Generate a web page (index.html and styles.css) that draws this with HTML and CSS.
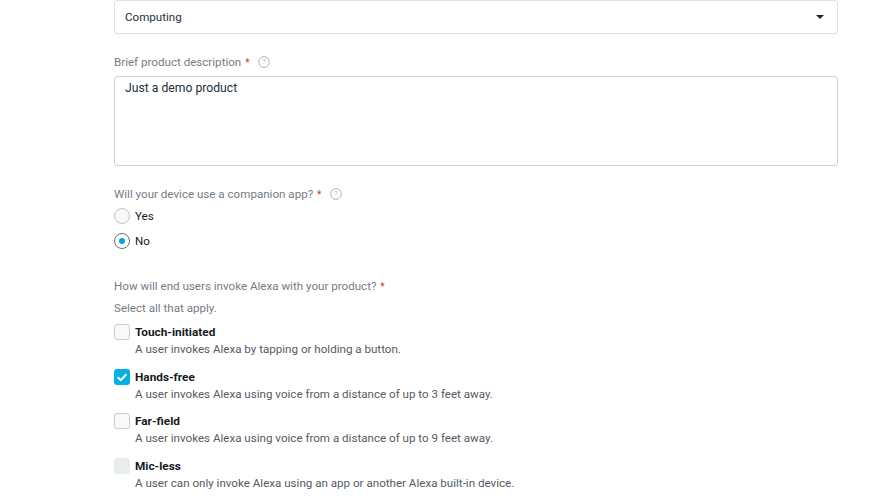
FILE: index.html
```html
<!DOCTYPE html>
<html lang="en">
<head>
<meta charset="utf-8">
<title>Product details</title>
<link rel="stylesheet" href="styles.css">
</head>
<body>
<form class="form">
  <div class="select"><span>Computing</span><span class="caret"></span></div>

  <div class="label desc-label">Brief product description <span class="req">*</span>
    <svg class="help" width="12" height="12" viewBox="0 0 12 12"><circle cx="6" cy="6" r="5.3" fill="none" stroke="#aab7b8" stroke-width="1"/><text x="6" y="8.4" text-anchor="middle" class="help-q">?</text></svg>
  </div>
  <div class="textarea">Just a demo product</div>

  <div class="label app-label">Will your device use a companion app? <span class="req">*</span>
    <svg class="help" width="12" height="12" viewBox="0 0 12 12"><circle cx="6" cy="6" r="5.3" fill="none" stroke="#aab7b8" stroke-width="1"/><text x="6" y="8.4" text-anchor="middle" class="help-q">?</text></svg>
  </div>
  <div class="radios">
    <div class="radio-row"><span class="radio"></span>Yes</div>
    <div class="radio-row"><span class="radio on"></span>No</div>
  </div>

  <div class="label invoke-label">How will end users invoke Alexa with your product? <span class="req">*</span></div>
  <div class="label hint">Select all that apply.</div>

  <div class="checks">
    <div class="check-row">
      <span class="box"></span>
      <div><div class="name">Touch-initiated</div><div class="sub">A user invokes Alexa by tapping or holding a button.</div></div>
    </div>
    <div class="check-row">
      <span class="box on"><svg width="16" height="16" viewBox="0 0 16 16"><path d="M3.6 8.2 6.8 11.2 12.4 5.2" fill="none" stroke="#fff" stroke-width="2"/></svg></span>
      <div><div class="name">Hands-free</div><div class="sub">A user invokes Alexa using voice from a distance of up to 3 feet away.</div></div>
    </div>
    <div class="check-row">
      <span class="box"></span>
      <div><div class="name">Far-field</div><div class="sub">A user invokes Alexa using voice from a distance of up to 9 feet away.</div></div>
    </div>
    <div class="check-row">
      <span class="box off"></span>
      <div><div class="name">Mic-less</div><div class="sub">A user can only invoke Alexa using an app or another Alexa built-in device.</div></div>
    </div>
  </div>
</form>
</body>
</html>
```
FILE: styles.css
```css
html, body { margin: 0; padding: 0; background: #fff; overflow: hidden; }
body { width: 880px; height: 500px; font-family: Roboto, sans-serif; font-size: 11.6px; line-height: 16px; color: #232f3e; }
.form { margin-left: 114px; width: 724px; display: flex; flex-direction: column; }
.select { box-sizing: border-box; height: 34px; padding: 0 10px; border: 1px solid #dcdfdf; border-radius: 3px; display: flex; align-items: center; justify-content: space-between; }
.caret { width: 0; height: 0; border-left: 4px solid transparent; border-right: 4px solid transparent; border-top: 4px solid #222; margin-right: 3px; }
.label { color: #747d85; }
.req { color: #d13212; font-size: 10px; margin-left: 1px; }
.help { vertical-align: -2px; margin-left: 6px; }
.help-q { font-size: 7px; fill: #aab7b8; }
.desc-label { margin-top: 20px; }
.textarea { box-sizing: border-box; margin-top: 5px; height: 90px; border: 1px solid #ccd0d0; border-radius: 3px; padding: 3px 10px; font-size: 12.2px; }
.app-label { margin-top: 20px; }
.radios { margin-top: 5px; display: flex; flex-direction: column; gap: 8.5px; }
.radio-row { display: flex; align-items: center; gap: 5px; height: 16px; color: #16191f; }
.radio { box-sizing: border-box; width: 16px; height: 16px; border: 1px solid #c0c6c6; border-radius: 50%; background: #f8f9f9; display: flex; align-items: center; justify-content: center; }
.radio.on { background: #fff; border-color: #687078; }
.radio.on::after { content: ""; width: 6px; height: 6px; border-radius: 50%; background: #00a8e1; }
.invoke-label { margin-top: 29.5px; }
.hint { margin-top: 5px; }
.checks { margin-top: 8px; display: flex; flex-direction: column; gap: 11.5px; }
.check-row { display: flex; gap: 5px; }
.box { box-sizing: border-box; flex: none; width: 16px; height: 16px; border: 1px solid #c8cdcd; border-radius: 3px; background: #f8f9f9; }
.box.on { background: #00b0e6; border: 0; }
.box.on svg { display: block; }
.box.off { background: #eaeded; border-color: #eaeded; }
.name { font-size: 11.8px; font-weight: 700; line-height: 16px; color: #16191f; }
.sub { color: #545b64; line-height: 16px; margin-top: 1px; }
```
